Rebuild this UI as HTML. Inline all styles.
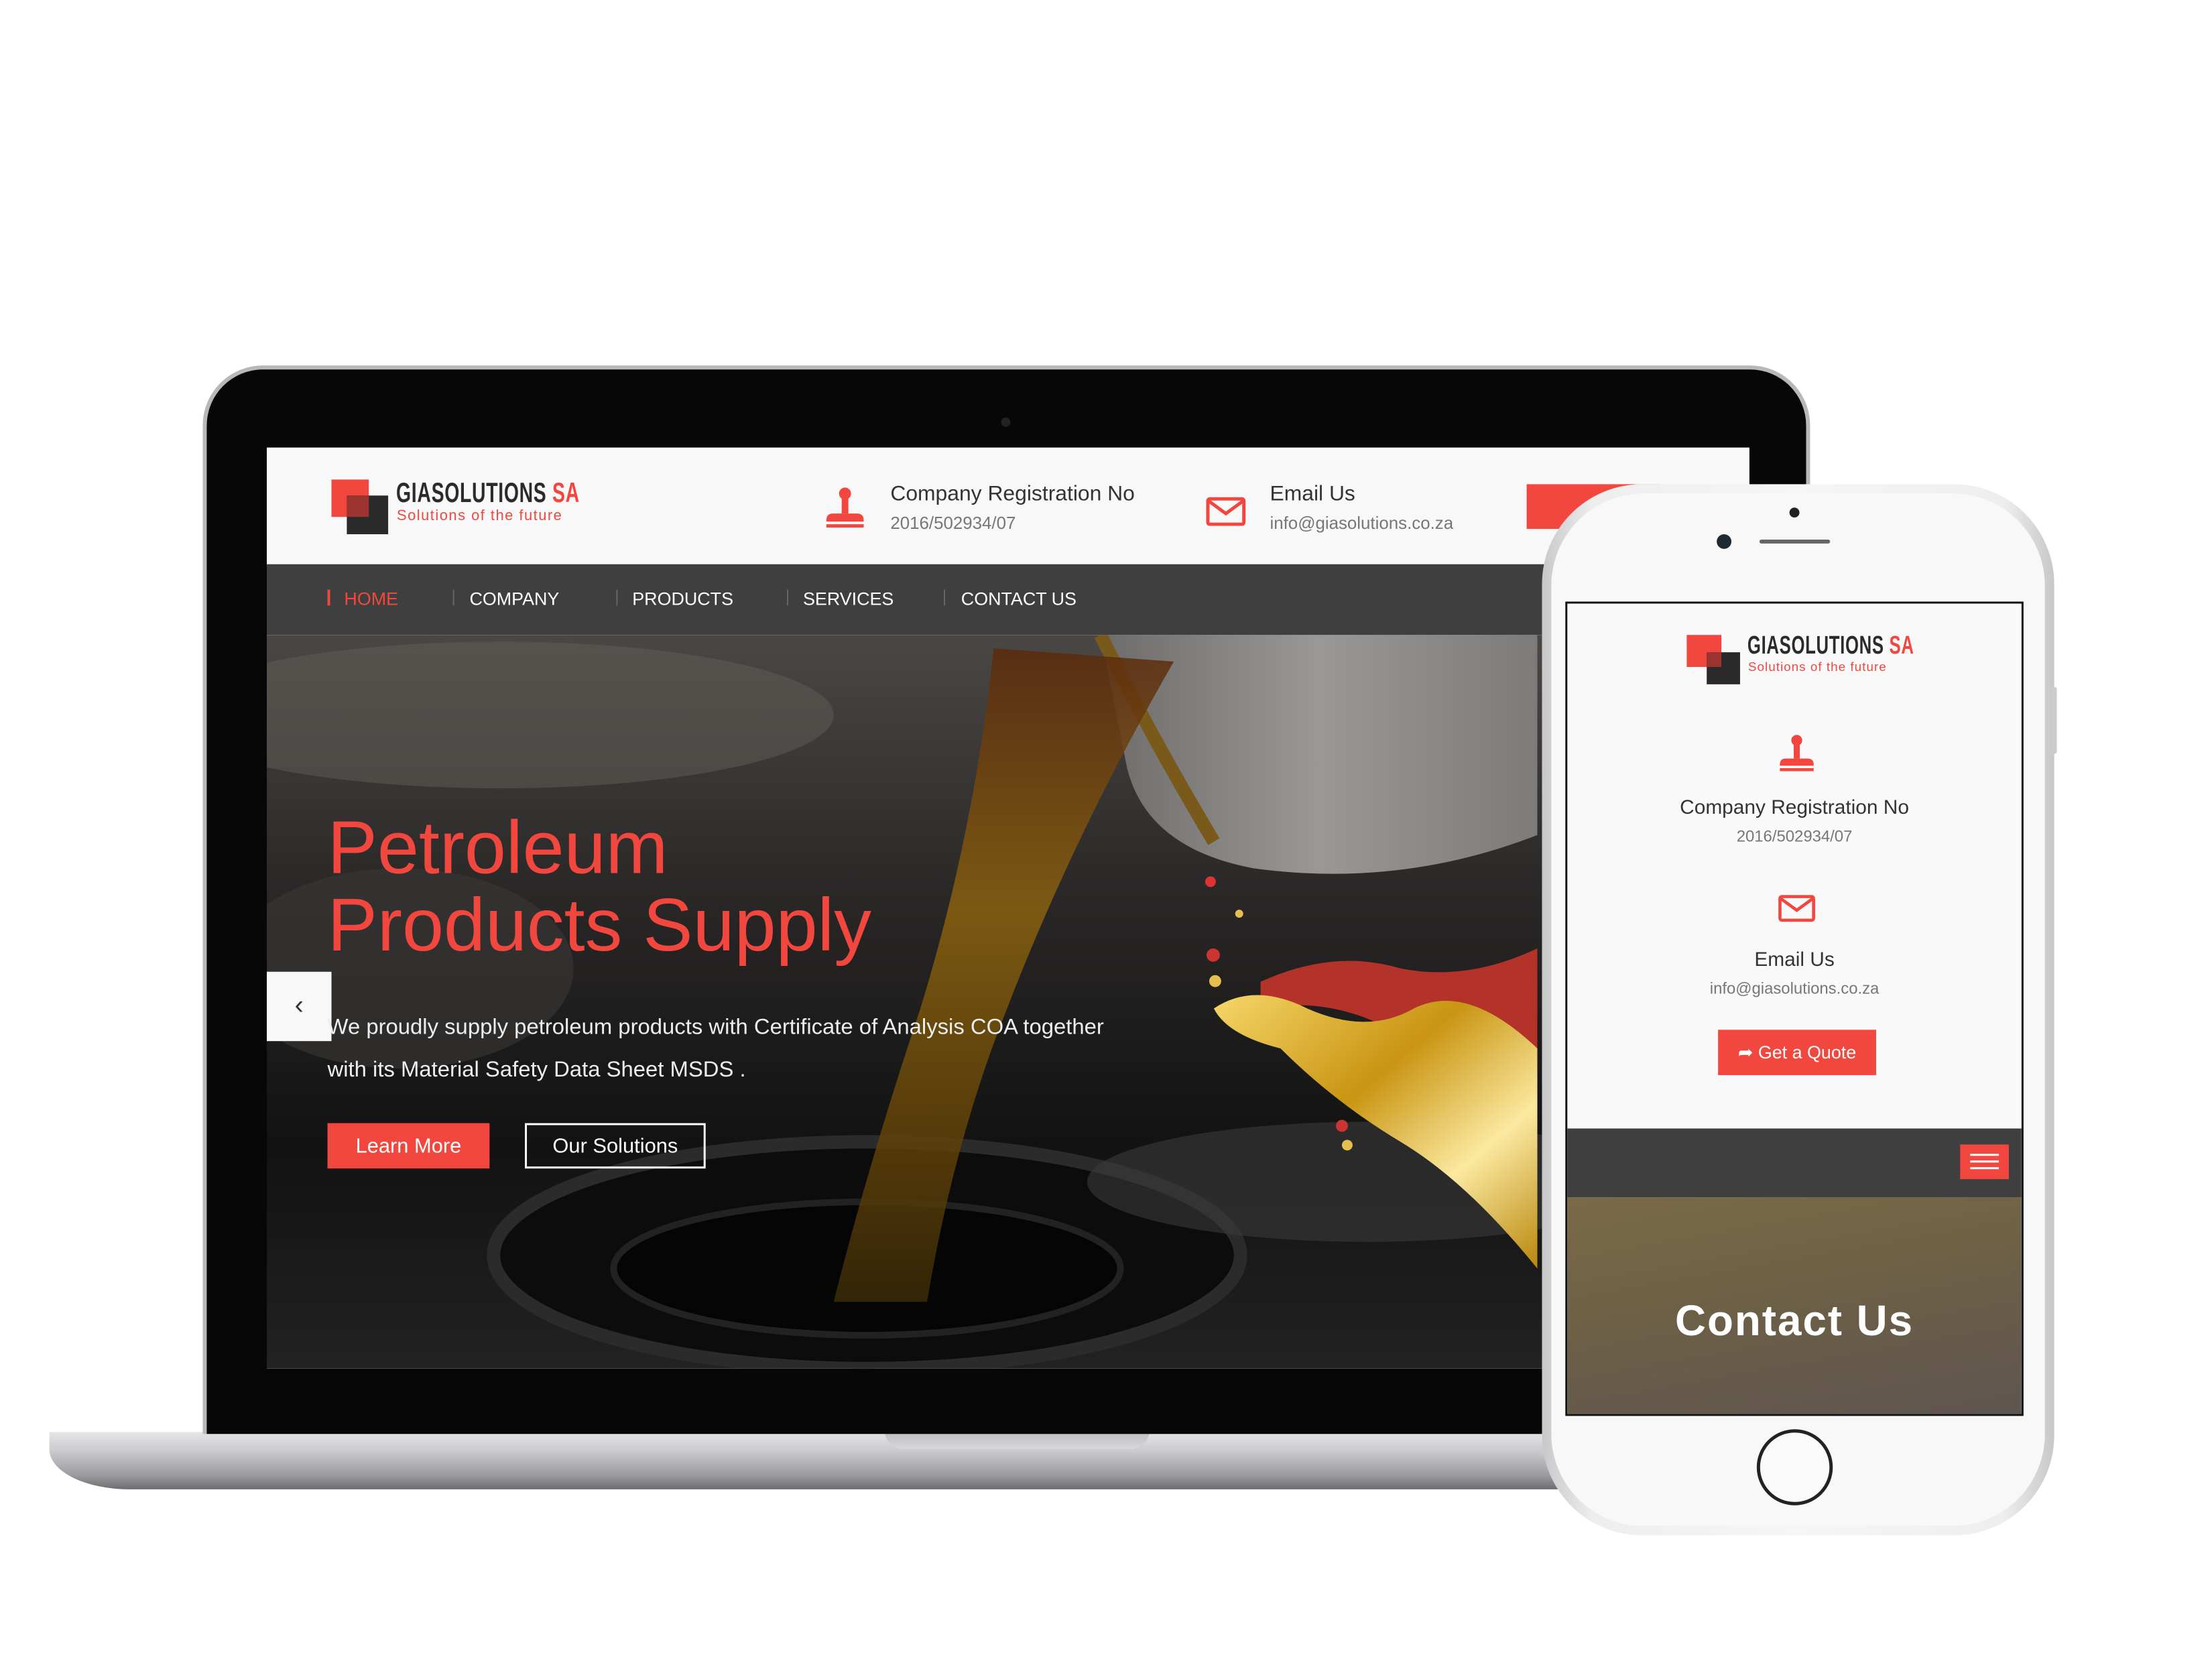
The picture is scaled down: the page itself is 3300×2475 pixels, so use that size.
<!DOCTYPE html>
<html><head><meta charset="utf-8"><style>
*{margin:0;padding:0;box-sizing:border-box}
body{width:3300px;height:2475px;background:#fff;position:relative;overflow:hidden;font-family:"Liberation Sans",sans-serif}
#w{position:absolute;left:0;top:0;width:3300px;height:2475px;transform:scale(.995);transform-origin:0 0}
.abs{position:absolute}
.red{color:#f2473f}
</style></head><body><div id="w">

<!-- laptop base -->
<div class="abs" style="left:74px;top:2147px;width:2660px;height:86px;border-radius:0 0 40px 120px/0 0 40px 60px;background:linear-gradient(#e6e6e8 0%,#c9c9cc 35%,#9c9ca0 75%,#6d6d70 100%)"></div>
<div class="abs" style="left:1326px;top:2141px;width:398px;height:32px;border-radius:0 0 30px 30px;background:linear-gradient(#b8b8bb,#d8d8da)"></div>

<!-- laptop lid -->
<div class="abs" style="left:304px;top:548px;width:2410px;height:1602px;border-radius:90px 90px 0 0;background:#b8b8ba"></div>
<div class="abs" style="left:310px;top:554px;width:2398px;height:1596px;border-radius:84px 84px 0 0;background:#070707"></div>
<div class="abs" style="left:1501px;top:626px;width:14px;height:14px;border-radius:50%;background:#222"></div>

<!-- laptop screen -->
<div class="abs" style="left:400px;top:671px;width:2223px;height:1381px;overflow:hidden;background:#f8f8f8">
  <div class="abs" style="left:97px;top:48px;width:56px;height:56px;background:#f2473f"></div>
  <div class="abs" style="left:120px;top:72px;width:62px;height:58px;background:#2a2a2a"></div>
  <div class="abs" style="left:120px;top:72px;width:33px;height:32px;background:#9b3330"></div>
  <div class="abs" style="left:194px;top:44px;font-size:42px;color:#2b2b2b;transform:scaleX(.68);transform-origin:left;white-space:nowrap;letter-spacing:1px;font-weight:bold">GIASOLUTIONS <span class="red">SA</span></div>
  <div class="abs red" style="left:195px;top:89px;font-size:22px;letter-spacing:1.5px;white-space:nowrap">Solutions of the future</div>

  <svg class="abs" style="left:837px;top:59px" width="60" height="64" viewBox="0 0 60 64"><circle cx="30" cy="10" r="9" fill="#f2473f"/><rect x="25" y="14" width="10" height="26" fill="#f2473f"/><path d="M2 50 Q2 40 12 40 H48 Q58 40 58 50 V52 H2Z" fill="#f2473f"/><rect x="2" y="56" width="56" height="5" fill="#f2473f"/></svg>
  <div class="abs" style="left:935px;top:50px;font-size:32px;color:#333">Company Registration No</div>
  <div class="abs" style="left:935px;top:98px;font-size:26px;color:#777">2016/502934/07</div>
  <svg class="abs" style="left:1408px;top:74px" width="60" height="44" viewBox="0 0 60 44"><rect x="3" y="3" width="54" height="38" rx="3" fill="none" stroke="#f2473f" stroke-width="5"/><path d="M4 6 L30 25 L56 6" fill="none" stroke="#f2473f" stroke-width="5"/></svg>
  <div class="abs" style="left:1504px;top:50px;font-size:32px;color:#333">Email Us</div>
  <div class="abs" style="left:1504px;top:98px;font-size:26px;color:#777">info@giasolutions.co.za</div>
  <div class="abs" style="left:1889px;top:55px;width:200px;height:67px;background:#f2473f"></div>

  <div class="abs" style="left:0;top:175px;width:2223px;height:106px;background:#3f3f3f"></div>
  <div class="abs" style="left:91px;top:213px;width:4px;height:24px;background:#f2473f"></div>
  <div class="abs" style="left:279px;top:213px;width:2px;height:24px;background:#666"></div>
  <div class="abs" style="left:524px;top:213px;width:2px;height:24px;background:#666"></div>
  <div class="abs" style="left:780px;top:213px;width:2px;height:24px;background:#666"></div>
  <div class="abs" style="left:1015px;top:213px;width:2px;height:24px;background:#666"></div>
  <div class="abs" style="top:212px;left:116px;font-size:27px;color:#f2473f">HOME</div>
  <div class="abs" style="top:212px;left:304px;font-size:27px;color:#fff">COMPANY</div>
  <div class="abs" style="top:212px;left:548px;font-size:27px;color:#fff">PRODUCTS</div>
  <div class="abs" style="top:212px;left:804px;font-size:27px;color:#fff">SERVICES</div>
  <div class="abs" style="top:212px;left:1041px;font-size:27px;color:#fff">CONTACT US</div>

  <svg class="abs" style="left:0;top:281px" width="2223" height="1100" viewBox="0 0 2223 1100">
    <defs>
      <linearGradient id="bg" x1="0" y1="0" x2="0" y2="1"><stop offset="0" stop-color="#4a4745"/><stop offset=".35" stop-color="#2a2827"/><stop offset=".7" stop-color="#121212"/><stop offset="1" stop-color="#222"/></linearGradient>
      <linearGradient id="oil" x1="0" y1="0" x2="0" y2="1"><stop offset="0" stop-color="#5a2a0c"/><stop offset=".4" stop-color="#8a620f"/><stop offset=".8" stop-color="#5b3e08"/><stop offset="1" stop-color="#3b2a08"/></linearGradient>
      <linearGradient id="gold" x1="0" y1="0" x2="1" y2="1"><stop offset="0" stop-color="#f6d66a"/><stop offset=".4" stop-color="#c99512"/><stop offset=".7" stop-color="#fbe9a0"/><stop offset="1" stop-color="#b8860b"/></linearGradient>
      <linearGradient id="bottle" x1="0" y1="0" x2="1" y2="0"><stop offset="0" stop-color="#6e6c6a"/><stop offset=".5" stop-color="#9a9896"/><stop offset="1" stop-color="#7d7b79"/></linearGradient>
    </defs>
    <rect width="2223" height="1100" fill="url(#bg)"/>
    <ellipse cx="350" cy="120" rx="500" ry="110" fill="#615d58" opacity=".5"/>
    <ellipse cx="200" cy="500" rx="260" ry="150" fill="#3a3837" opacity=".6"/>
    <ellipse cx="900" cy="930" rx="560" ry="170" fill="#0c0c0c" stroke="#2b2b2b" stroke-width="20"/>
    <ellipse cx="900" cy="950" rx="380" ry="100" fill="#050505" stroke="#222" stroke-width="10"/>
    <ellipse cx="1650" cy="820" rx="420" ry="90" fill="#3b3b3b" opacity=".6"/>
    <path d="M1250 0 L1905 0 L1905 300 Q1700 380 1480 350 Q1320 320 1290 200 Z" fill="url(#bottle)"/>
    <path d="M1250 0 Q1330 160 1420 310" stroke="#7a5a1a" stroke-width="20" fill="none"/>
    <path d="M1090 20 Q1060 300 980 560 Q900 800 850 1000 L990 1000 Q1030 760 1110 560 Q1210 300 1360 40 Z" fill="url(#oil)" opacity=".85"/>
    <path d="M1490 520 Q1600 470 1700 500 Q1800 520 1905 470 L1905 760 Q1800 700 1700 600 Q1600 540 1490 560 Z" fill="#b3322a"/>
    <path d="M1420 560 Q1480 520 1560 560 Q1650 600 1720 560 Q1800 520 1905 620 L1905 950 Q1800 820 1700 760 Q1600 700 1520 620 Q1440 600 1420 560Z" fill="url(#gold)"/>
    <circle cx="1415" cy="370" r="8" fill="#d33"/><circle cx="1458" cy="418" r="6" fill="#e5c050"/>
    <circle cx="1419" cy="480" r="10" fill="#c33"/><circle cx="1422" cy="519" r="9" fill="#e5c050"/>
    <circle cx="1612" cy="736" r="9" fill="#c33"/><circle cx="1620" cy="765" r="8" fill="#e5c050"/>
  </svg>
  <div class="abs" style="left:91px;top:542px;font-size:112px;line-height:116px;color:#f2473f">Petroleum<br>Products Supply</div>
  <div class="abs" style="left:0;top:786px;width:97px;height:104px;background:#f8f8f8;color:#333;font-size:40px;text-align:center;line-height:100px">‹</div>
  <div class="abs" style="left:91px;top:836px;font-size:33px;line-height:64px;color:#eee;white-space:nowrap">We proudly supply petroleum products with Certificate of Analysis COA together<br>with its Material Safety Data Sheet MSDS .</div>
  <div class="abs" style="left:91px;top:1013px;width:243px;height:68px;background:#f2473f;color:#fff;font-size:31px;line-height:68px;text-align:center">Learn More</div>
  <div class="abs" style="left:387px;top:1013px;width:271px;height:68px;border:3px solid #fff;color:#fff;font-size:31px;line-height:62px;text-align:center">Our Solutions</div>
</div>

<!-- phone -->
<div class="abs" style="left:2312px;top:726px;width:768px;height:1576px;border-radius:150px;background:linear-gradient(90deg,#c8c8ca,#eeeeee 10%,#f6f6f6 50%,#eeeeee 90%,#c8c8ca)"></div>
<div class="abs" style="left:2326px;top:740px;width:740px;height:1548px;border-radius:138px;background:#f8f8f8"></div>
<div class="abs" style="left:3076px;top:1030px;width:8px;height:100px;background:#ccc;border-radius:3px"></div>
<div class="abs" style="left:2683px;top:761px;width:15px;height:15px;border-radius:50%;background:#222"></div>
<div class="abs" style="left:2574px;top:801px;width:22px;height:22px;border-radius:50%;background:#1e2a33"></div>
<div class="abs" style="left:2638px;top:809px;width:106px;height:6px;border-radius:3px;background:#666"></div>
<div class="abs" style="left:2634px;top:2143px;width:114px;height:114px;border-radius:50%;border:5px solid #222;background:#fafafa"></div>

<div class="abs" style="left:2347px;top:902px;width:687px;height:1221px;border:3px solid #111;background:#f9f9f9;overflow:hidden">
  <div class="abs" style="left:179px;top:47px;width:52px;height:48px;background:#f2473f"></div>
  <div class="abs" style="left:209px;top:73px;width:50px;height:48px;background:#2a2a2a"></div>
  <div class="abs" style="left:209px;top:73px;width:22px;height:22px;background:#9b3330"></div>
  <div class="abs" style="left:270px;top:42px;font-size:38px;color:#2b2b2b;transform:scaleX(.68);transform-origin:left;white-space:nowrap;letter-spacing:1px;font-weight:bold">GIASOLUTIONS <span class="red">SA</span></div>
  <div class="abs red" style="left:271px;top:85px;font-size:19px;letter-spacing:1px;white-space:nowrap">Solutions of the future</div>
  <svg class="abs" style="left:316px;top:196px" width="56" height="58" viewBox="0 0 60 64"><circle cx="30" cy="10" r="9" fill="#f2473f"/><rect x="25" y="14" width="10" height="26" fill="#f2473f"/><path d="M2 50 Q2 40 12 40 H48 Q58 40 58 50 V52 H2Z" fill="#f2473f"/><rect x="2" y="56" width="56" height="5" fill="#f2473f"/></svg>
  <div class="abs" style="left:0;width:681px;text-align:center;top:289px;font-size:30px;color:#333">Company Registration No</div>
  <div class="abs" style="left:0;width:681px;text-align:center;top:336px;font-size:24px;color:#777">2016/502934/07</div>
  <svg class="abs" style="left:316px;top:436px" width="56" height="42" viewBox="0 0 60 44"><rect x="3" y="3" width="54" height="38" rx="3" fill="none" stroke="#f2473f" stroke-width="5"/><path d="M4 6 L30 25 L56 6" fill="none" stroke="#f2473f" stroke-width="5"/></svg>
  <div class="abs" style="left:0;width:681px;text-align:center;top:517px;font-size:30px;color:#333">Email Us</div>
  <div class="abs" style="left:0;width:681px;text-align:center;top:564px;font-size:24px;color:#777">info@giasolutions.co.za</div>
  <div class="abs" style="left:226px;top:639px;width:237px;height:68px;background:#f2473f;color:#fff;font-size:27px;line-height:68px;text-align:center">➦ Get a Quote</div>
  <div class="abs" style="left:0;top:787px;width:681px;height:103px;background:#3f3f3f"></div>
  <div class="abs" style="left:589px;top:811px;width:73px;height:52px;background:#f2473f"></div>
  <div class="abs" style="left:604px;top:825px;width:43px;height:3px;background:#fff;box-shadow:0 10px 0 #fff,0 20px 0 #fff"></div>
  <div class="abs" style="left:0;top:890px;width:681px;height:330px;background:linear-gradient(170deg,#7a6a48 0%,#6d6046 45%,#5e5550 100%)"></div>
  <div class="abs" style="left:0;width:681px;text-align:center;top:1038px;font-size:64px;font-weight:bold;color:#fff;letter-spacing:2px">Contact Us</div>
</div>
</div></body></html>
